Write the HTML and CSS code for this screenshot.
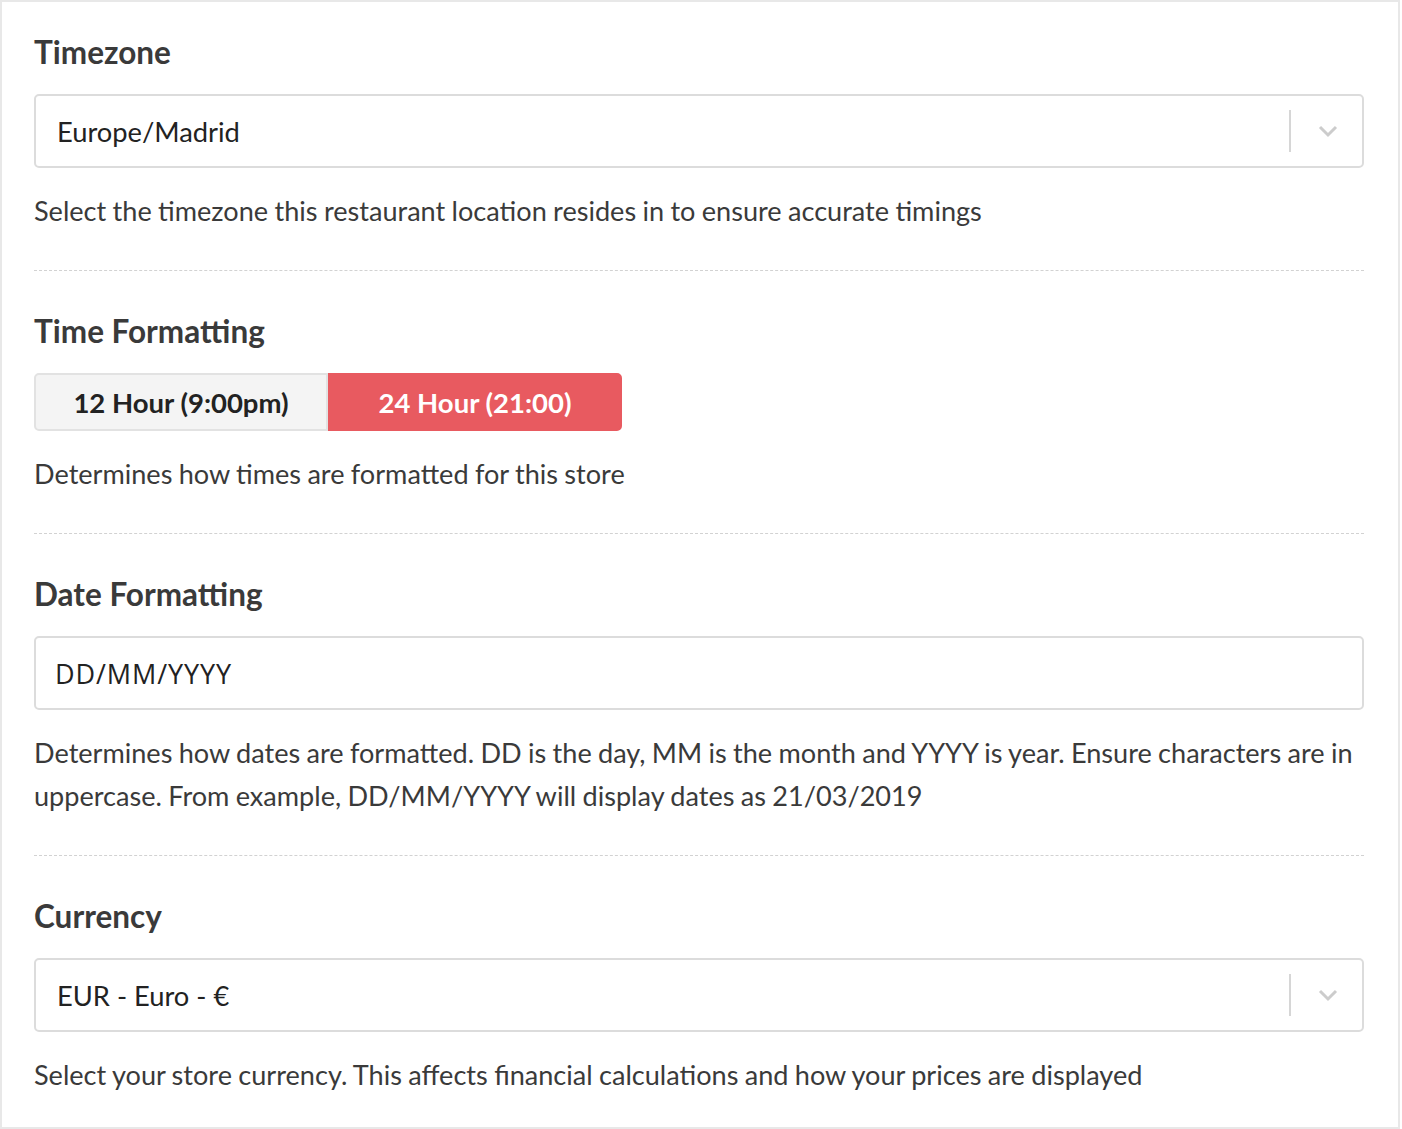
FILE: index.html
```html
<!DOCTYPE html>
<html>
<head>
<meta charset="utf-8">
<link rel="stylesheet" href="styles.css">
</head>
<body>
<div class="card">
  <section class="field first">
    <h2 class="label">Timezone</h2>
    <div class="select">
      <span class="value">Europe/Madrid</span>
      <span class="sep"></span>
      <svg class="chev" width="22" height="14" viewBox="0 0 22 14"><path d="M3 3 L11 11 L19 3" fill="none" stroke="#cccccc" stroke-width="3"/></svg>
    </div>
    <p class="help">Select the timezone this restaurant location resides in to ensure accurate timings</p>
  </section>
  <section class="field">
    <h2 class="label">Time Formatting</h2>
    <div class="toggle">
      <button class="opt">12 Hour (9:00pm)</button>
      <button class="opt active">24 Hour (21:00)</button>
    </div>
    <p class="help">Determines how times are formatted for this store</p>
  </section>
  <section class="field">
    <h2 class="label">Date Formatting</h2>
    <div class="input"><span class="value mono">DD/MM/YYYY</span></div>
    <p class="help">Determines how dates are formatted. DD is the day, MM is the month and YYYY is year. Ensure characters are in uppercase. From example, DD/MM/YYYY will display dates as 21/03/2019</p>
  </section>
  <section class="field last">
    <h2 class="label">Currency</h2>
    <div class="select">
      <span class="value">EUR - Euro - €</span>
      <span class="sep"></span>
      <svg class="chev" width="22" height="14" viewBox="0 0 22 14"><path d="M3 3 L11 11 L19 3" fill="none" stroke="#cccccc" stroke-width="3"/></svg>
    </div>
    <p class="help">Select your store currency. This affects financial calculations and how your prices are displayed</p>
  </section>
</div>
</body>
</html>
```
FILE: styles.css
```css
* { box-sizing: border-box; }
html, body { margin: 0; padding: 0; background: #ffffff; }
body { font-family: Lato, "Liberation Sans", sans-serif; color: #333333; }

.card {
  width: 1400px;
  height: 1129px;
  border: 2px solid #e8e8e8;
  padding: 0 34px 0 32px;
}

.field {
  padding: 42px 0 38px;
  border-bottom: 1px dashed #d2d2d2;
}
.field.first { padding-top: 32px; }
.field.last { border-bottom: none; }

.label {
  margin: 0 0 24px;
  font-size: 31.5px;
  line-height: 36px;
  font-weight: 700;
  color: #3a3a3a;
}

.select, .input {
  display: flex;
  align-items: center;
  height: 74px;
  border: 2px solid #dcdcdc;
  border-radius: 5px;
  padding: 0 0 0 21px;
  background: #fff;
}
.input { padding-left: 19px; }
.value {
  flex: 1;
  font-size: 27.3px;
  color: #222;
}
.mono {
  font-family: "Open Sans", "Noto Sans", sans-serif;
  font-size: 27px;
  letter-spacing: 0.9px;
}
.sep {
  width: 2px;
  height: 42px;
  background: #d6d6d6;
}
.chev { margin: 0 23px 0 26px; }

.toggle { display: flex; }
.opt {
  height: 58px;
  width: 294px;
  font-family: Lato, "Liberation Sans", sans-serif;
  font-size: 27.5px;
  font-weight: 700;
  border: 2px solid #e2e2e2;
  background: #f4f4f4;
  color: #222;
  border-radius: 5px 0 0 5px;
  padding: 0;
}
.opt.active {
  background: #e85a60;
  border-color: #e85a60;
  color: #ffffff;
  border-radius: 0 5px 5px 0;
}

.help {
  margin: 21px 0 0;
  font-size: 27.1px;
  line-height: 43px;
  word-spacing: -0.6px;
  color: #3a3a3a;
}
```
